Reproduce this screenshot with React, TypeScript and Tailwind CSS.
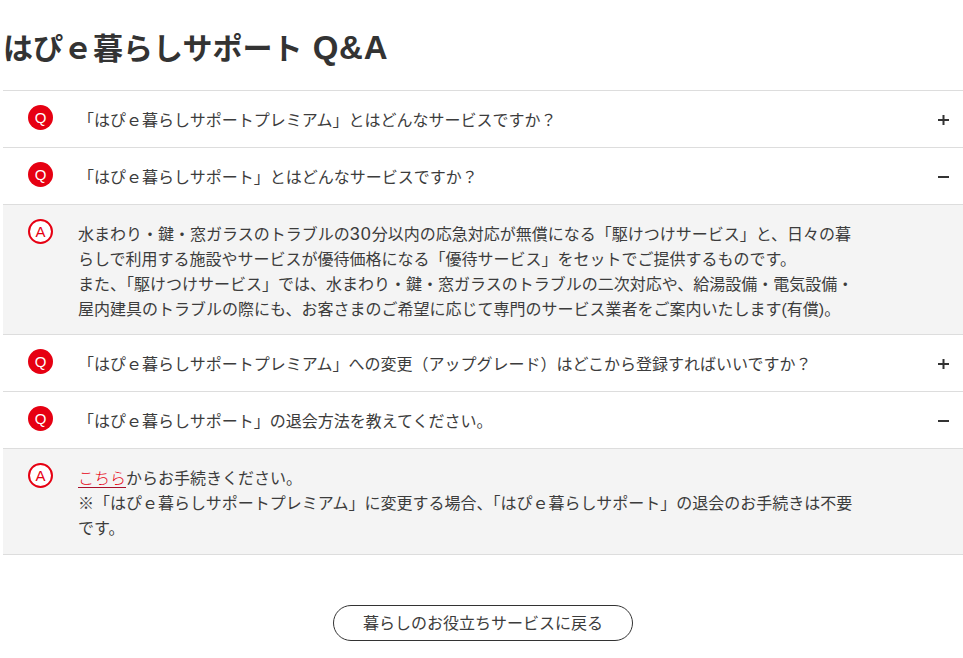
const font = { fontFamily: '"Liberation Sans", "Noto Sans CJK JP", sans-serif' };

function Mark({ kind }: { kind: "Q" | "A" }) {
  return kind === "Q" ? (
    <span className="flex h-[25px] w-[25px] shrink-0 items-center justify-center rounded-full bg-[#e60012] text-[15px] font-light leading-none text-white">Q</span>
  ) : (
    <span className="flex h-[25px] w-[25px] shrink-0 items-center justify-center rounded-full border-2 border-[#e60012] bg-white text-[15px] font-light leading-none text-[#e60012]">A</span>
  );
}

function Question({ text, open }: { text: string; open: boolean }) {
  return (
    <div className="flex h-[57px] items-start border-t border-[#dddddd] pl-[25px] pr-[14px]">
      <div className="mt-[14px]"><Mark kind="Q" /></div>
      <p className="ml-[25px] mt-[18px] flex-1 text-[16px] leading-[24px] text-[#3c3c3c]">{text}</p>
      <svg className="mt-[24px]" width="11" height="10" viewBox="0 0 11 10" fill="#333333">
        <rect x="0" y="4" width="11" height="2" />
        {!open && <rect x="4.5" y="0" width="2" height="10" />}
      </svg>
    </div>
  );
}

function Answer({ children, height }: { children: React.ReactNode; height: string }) {
  return (
    <div className={`flex items-start border-t border-[#dddddd] bg-[#f4f4f4] pl-[25px] ${height}`}>
      <div className="mt-[14px]"><Mark kind="A" /></div>
      <div className="ml-[25px] mt-[17px] w-[780px] text-[16px] leading-[25px] text-[#3c3c3c]">{children}</div>
    </div>
  );
}

export default function App() {
  return (
    <div style={font} className="h-[658px] w-[963px] overflow-hidden bg-white pl-[3px] text-[#333333]">
      <h1 className="mt-[29px] h-[40px] text-[30px] font-bold leading-[40px]">はぴｅ暮らしサポート <span className="ml-[2px] text-[33px] leading-none tracking-[0.7px]">Q&amp;A</span></h1>
      <div className="mt-[21px]">
        <Question text="「はぴｅ暮らしサポートプレミアム」とはどんなサービスですか？" open={false} />
        <Question text="「はぴｅ暮らしサポート」とはどんなサービスですか？" open />
        <Answer height="h-[130px]">
          水まわり・鍵・窓ガラスのトラブルの<span className="text-[18px] leading-none tracking-[1px]">30</span>分以内の応急対応が無償になる「駆けつけサービス」と、日々の暮らしで利用する施設やサービスが優待価格になる「優待サービス」をセットでご提供するものです。<br />
          また、「駆けつけサービス」では、水まわり・鍵・窓ガラスのトラブルの二次対応や、給湯設備・電気設備・屋内建具のトラブルの際にも、お客さまのご希望に応じて専門のサービス業者をご案内いたします(有償)。
        </Answer>
        <Question text="「はぴｅ暮らしサポートプレミアム」への変更（アップグレード）はどこから登録すればいいですか？" open={false} />
        <Question text="「はぴｅ暮らしサポート」の退会方法を教えてください。" open />
        <Answer height="h-[106px]">
          <a className="font-light text-[#e60012] underline decoration-[#a8102a] underline-offset-[3px]">こちら</a>からお手続きください。<br />
          ※「はぴｅ暮らしサポートプレミアム」に変更する場合、「はぴｅ暮らしサポート」の退会のお手続きは不要です。
        </Answer>
        <div className="border-t border-[#dddddd] pt-[50px]">
          <a className="ml-[330px] flex h-[36px] w-[300px] items-center justify-center rounded-full border border-[#333333] pt-[2px] text-[16px] text-[#3c3c3c]">暮らしのお役立ちサービスに戻る</a>
        </div>
      </div>
    </div>
  );
}
